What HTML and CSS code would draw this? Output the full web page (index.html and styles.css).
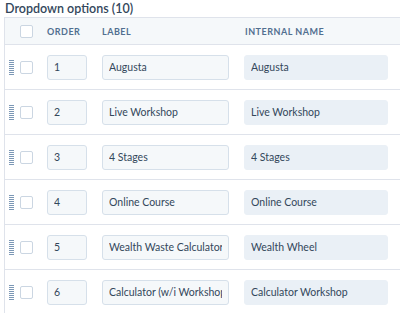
FILE: index.html
```html
<html lang="en">
<head>
    <meta charset="UTF-8">
    <meta name="viewport" content="width=device-width, initial-scale=1.0">
    <title>Dropdown options</title>
    <link rel="stylesheet" href="styles.css">
</head>
<body>
    <div class="title">Dropdown options (10)</div>
    <div class="options-table">
        <div class="row header">
            <span class="handle-space"></span>
            <span class="checkbox"></span>
            <span class="col-order">ORDER</span>
            <span class="col-label">LABEL</span>
            <span class="col-internal">INTERNAL NAME</span>
        </div>

        <div class="row">
            <span class="handle"></span>
            <span class="checkbox"></span>
            <input class="order" type="text" value="1">
            <input class="label" type="text" value="Augusta">
            <input class="internal" type="text" value="Augusta" readonly>
        </div>

        <div class="row">
            <span class="handle"></span>
            <span class="checkbox"></span>
            <input class="order" type="text" value="2">
            <input class="label" type="text" value="Live Workshop">
            <input class="internal" type="text" value="Live Workshop" readonly>
        </div>

        <div class="row">
            <span class="handle"></span>
            <span class="checkbox"></span>
            <input class="order" type="text" value="3">
            <input class="label" type="text" value="4 Stages">
            <input class="internal" type="text" value="4 Stages" readonly>
        </div>

        <div class="row">
            <span class="handle"></span>
            <span class="checkbox"></span>
            <input class="order" type="text" value="4">
            <input class="label" type="text" value="Online Course">
            <input class="internal" type="text" value="Online Course" readonly>
        </div>

        <div class="row">
            <span class="handle"></span>
            <span class="checkbox"></span>
            <input class="order" type="text" value="5">
            <input class="label" type="text" value="Wealth Waste Calculator">
            <input class="internal" type="text" value="Wealth Wheel" readonly>
        </div>

        <div class="row">
            <span class="handle"></span>
            <span class="checkbox"></span>
            <input class="order" type="text" value="6">
            <input class="label" type="text" value="Calculator (w/i Workshop)">
            <input class="internal" type="text" value="Calculator Workshop" readonly>
        </div>
    </div>
</body>
</html>
```
FILE: styles.css
```css
body {
    margin: 0;
    font-family: Lato, sans-serif;
    color: #33475b;
    background: #fff;
    overflow: hidden;
}
.title {
    height: 17px;
    line-height: 17px;
    padding-left: 5px;
    font-size: 12.5px;
    font-weight: 600;
}
.options-table {
    border-left: 1px solid #dfe3eb;
    margin-left: 4px;
    border-top: 1px solid #dfe3eb;
}
.row {
    display: flex;
    align-items: center;
    height: 44px;
    border-bottom: 1px solid #dfe3eb;
}
.row.header {
    height: 26px;
    background: #f5f8fa;
    font-size: 9px;
    font-weight: 700;
    letter-spacing: 0.5px;
    color: #516f90;
}
.handle,
.handle-space {
    width: 5px;
    height: 15px;
    margin-left: 4px;
}
.handle {
    background: repeating-linear-gradient(to bottom, #7c98b6 0, #7c98b6 1px, transparent 1px, transparent 2px);
}
.checkbox {
    width: 11px;
    height: 11px;
    margin-left: 6px;
    border: 1px solid #cbd6e2;
    border-radius: 2px;
    background: #fff;
}
.col-order {
    margin-left: 14px;
    width: 40px;
}
.col-label {
    margin-left: 15px;
    width: 127px;
}
.col-internal {
    margin-left: 16px;
}
input {
    box-sizing: border-box;
    height: 25px;
    font-family: inherit;
    font-size: 10.5px;
    color: #33475b;
    padding: 0 6px;
    border-radius: 3px;
    outline: none;
}
.order,
.label {
    background: #f5f8fa;
    border: 1px solid #d6e0ea;
}
.order {
    width: 40px;
    margin-left: 14px;
}
.label {
    width: 127px;
    margin-left: 15px;
}
.internal {
    width: 144px;
    margin-left: 15px;
    background: #eaf0f6;
    border: 1px solid #eaf0f6;
}
```
